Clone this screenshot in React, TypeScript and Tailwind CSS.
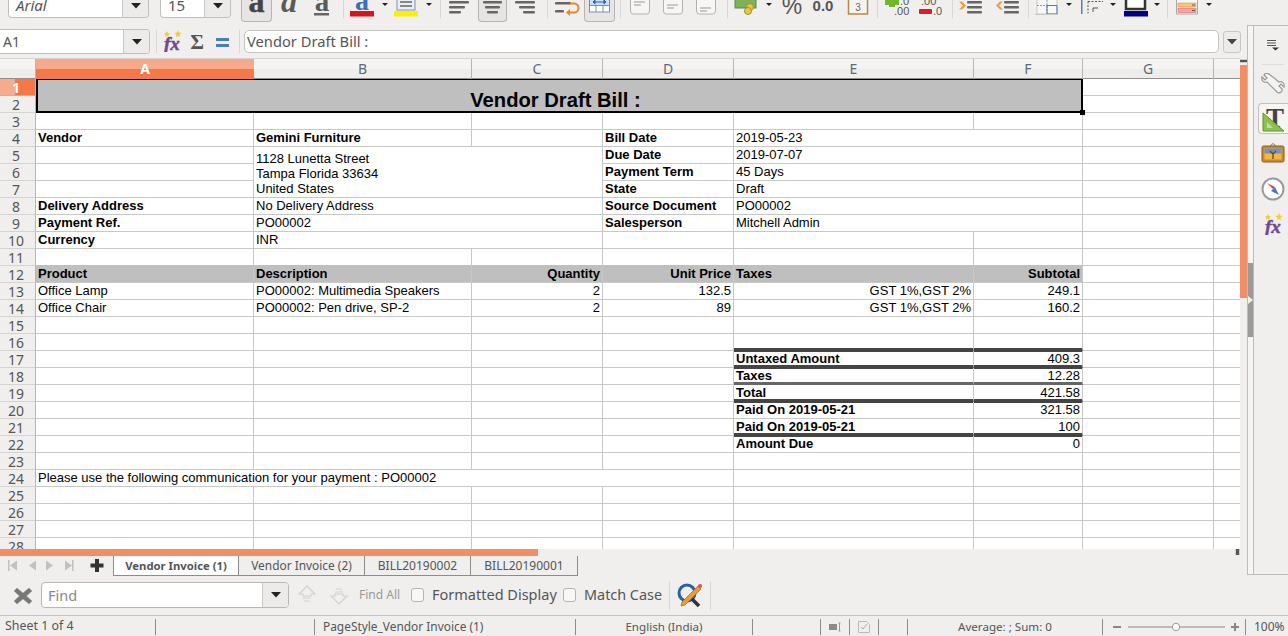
import type { ReactNode } from "react";

const COLS = ["A", "B", "C", "D", "E", "F", "G", "H"];
const ROWS = Array.from({ length: 28 }, (_, i) => i + 1);

const bold = "font-bold";
const right = "text-right pr-[2px]";
const head = "bg-[#bfbfbf] border-[#bfbfbf] -mt-px pt-px font-bold";
const thick = "border-b-[4px] border-b-[#444444] -mb-px";
const mid = "border-b-[3px] border-b-[#666666]";

type CellDef = { text?: ReactNode; cls?: string };

const CELLS: Record<string, CellDef> = {
  A4: { text: "Vendor", cls: bold },
  B4: { text: "Gemini Furniture", cls: bold },
  D4: { text: "Bill Date", cls: bold },
  E4: { text: "2019-05-23", cls: "col-span-2" },
  B5: {
    text: (
      <span className="block leading-[15px] pt-[4px]">
        1128 Lunetta Street
        <br />
        Tampa Florida 33634
        <br />
        United States
      </span>
    ),
    cls: "col-span-2 row-span-3",
  },
  D5: { text: "Due Date", cls: bold },
  E5: { text: "2019-07-07", cls: "col-span-2" },
  D6: { text: "Payment Term", cls: bold },
  E6: { text: "45 Days", cls: "col-span-2" },
  D7: { text: "State", cls: bold },
  E7: { text: "Draft", cls: "col-span-2" },
  A8: { text: "Delivery Address", cls: bold },
  B8: { text: "No Delivery Address", cls: "col-span-2" },
  D8: { text: "Source Document", cls: bold },
  E8: { text: "PO00002", cls: "col-span-2" },
  A9: { text: "Payment Ref.", cls: bold },
  B9: { text: "PO00002", cls: "col-span-2" },
  D9: { text: "Salesperson", cls: bold },
  E9: { text: "Mitchell Admin", cls: "col-span-2" },
  A10: { text: "Currency", cls: bold },
  B10: { text: "INR", cls: "col-span-2" },
  A12: { text: "Product", cls: head },
  B12: { text: "Description", cls: head },
  C12: { text: "Quantity", cls: `${head} ${right}` },
  D12: { text: "Unit Price", cls: `${head} ${right}` },
  E12: { text: "Taxes", cls: head },
  F12: { text: "Subtotal", cls: `${head} ${right}` },
  A13: { text: "Office Lamp" },
  B13: { text: "PO00002: Multimedia Speakers" },
  C13: { text: "2", cls: right },
  D13: { text: "132.5", cls: right },
  E13: { text: "GST 1%,GST 2%", cls: right },
  F13: { text: "249.1", cls: right },
  A14: { text: "Office Chair" },
  B14: { text: "PO00002: Pen drive, SP-2" },
  C14: { text: "2", cls: right },
  D14: { text: "89", cls: right },
  E14: { text: "GST 1%,GST 2%", cls: right },
  F14: { text: "160.2", cls: right },
  E16: { cls: thick },
  F16: { cls: thick },
  E17: { text: "Untaxed Amount", cls: `${bold} ${thick}` },
  F17: { text: "409.3", cls: `${right} ${thick}` },
  E18: { text: "Taxes", cls: `${bold} ${mid}` },
  F18: { text: "12.28", cls: `${right} ${mid}` },
  E19: { text: "Total", cls: `${bold} ${thick}` },
  F19: { text: "421.58", cls: `${right} ${thick}` },
  E20: { text: "Paid On 2019-05-21", cls: bold },
  F20: { text: "321.58", cls: right },
  E21: { text: "Paid On 2019-05-21", cls: `${bold} ${thick}` },
  F21: { text: "100", cls: `${right} ${thick}` },
  E22: { text: "Amount Due", cls: bold },
  F22: { text: "0", cls: right },
  A24: { text: "Please use the following communication for your payment : PO00002", cls: "col-span-4" },
};

// cells swallowed by a merge
const COVERED = new Set<string>([
  ...["A", "B", "C", "D", "E", "F"].flatMap((c) => [`${c}1`, `${c}2`]),
  "C5", "C6", "C7", "B6", "B7", "C8", "C9", "C10",
  "F4", "F5", "F6", "F7", "F8", "F9",
  "B24", "C24", "D24",
]);

function Caret({ x, y = 3 }: { x: number; y?: number }) {
  return <path d={`M${x} ${y}h6l-3 3z`} fill="#222" />;
}

function Bars({ x, w = 20, color = "#666" }: { x: number; w?: number; color?: string }) {
  return (
    <g fill={color}>
      <rect x={x} y="1" width={w} height="2.5" rx="1" />
      <rect x={x} y="6" width={w} height="2.5" rx="1" />
      <rect x={x} y="11" width={w} height="2.5" rx="1" />
    </g>
  );
}

function Sep({ h = "h-[18px]" }: { h?: string }) {
  return (
    <div className="w-[8px] shrink-0 flex justify-center">
      <div className={`w-px bg-[#d8d7d5] ${h}`} />
    </div>
  );
}

function Pressed({ w, children }: { w: string; children: ReactNode }) {
  return (
    <div className={`${w} h-[22px] shrink-0 bg-[#e6e5e3] border-x border-b border-[#b5b4b2] rounded-b-[4px] overflow-hidden`}>
      {children}
    </div>
  );
}

function Combo({ w, label, italic }: { w: string; label: string; italic?: boolean }) {
  return (
    <div className={`${w} h-[18px] shrink-0 flex bg-white border-x border-b border-[#c0bfbd] rounded-b-[4px] overflow-hidden`}>
      <div className={`flex-1 pl-[7px] text-[15px] leading-[11px] text-[#555] ${italic ? "italic" : ""}`}>{label}</div>
      <div className="w-[26px] bg-[#ecebe9] border-l border-[#c8c7c5] flex justify-center pt-[3px]">
        <svg className="w-[10px] h-[6px]" viewBox="0 0 10 6"><path d="M0 0h10L5 5.5z" fill="#222" /></svg>
      </div>
    </div>
  );
}

function AlignBox({ lineY }: { lineY: number }) {
  return (
    <svg className="w-[33px] h-[25px] shrink-0" viewBox="0 0 33 25">
      <rect x="6.5" y="-4" width="19" height="18" rx="3" fill="#f7f6f5" stroke="#b3b2b0" />
      <path d={`M10 ${lineY}h11M10 ${lineY + 3}h7`} stroke="#9a9997" strokeWidth="1" />
    </svg>
  );
}

function Toolbar() {
  return (
    <div className="h-[25px] shrink-0 flex items-start overflow-hidden pl-[8px]">
      <Combo w="w-[141px]" label="Arial" italic />
      <div className="w-[11px] shrink-0" />
      <Combo w="w-[71px]" label="15" />
      <div className="w-[10px] shrink-0" />
      <Pressed w="w-[31px]">
        <svg className="w-[29px] h-[21px]" viewBox="0 0 29 21">
          <text x="14.5" y="12" textAnchor="middle" fontFamily="Liberation Serif, serif" fontSize="32" fontWeight="700" fill="#444" stroke="#444" strokeWidth="0.5">a</text>
        </svg>
      </Pressed>
      <svg className="w-[34px] h-[25px] shrink-0" viewBox="0 0 34 25">
        <text x="17" y="12" textAnchor="middle" fontFamily="Liberation Serif, serif" fontSize="32" fontStyle="italic" fontWeight="700" fill="#5a5a5a">a</text>
      </svg>
      <svg className="w-[33px] h-[25px] shrink-0" viewBox="0 0 33 25">
        <text x="16" y="11" textAnchor="middle" fontFamily="Liberation Serif, serif" fontSize="29" fontWeight="700" fill="#5a5a5a">a</text>
        <rect x="8" y="13" width="15" height="2.5" fill="#666" />
      </svg>
      <Sep />
      <svg className="w-[45px] h-[25px] shrink-0" viewBox="0 0 45 25">
        <text x="15" y="10" textAnchor="middle" fontFamily="Liberation Serif, serif" fontSize="28" fontWeight="700" fill="#3c6eb4">a</text>
        <rect x="3" y="11" width="24" height="5.5" fill="#d6161f" />
        <Caret x={35} />
      </svg>
      <svg className="w-[44px] h-[25px] shrink-0" viewBox="0 0 44 25">
        <rect x="5" y="-4" width="18" height="14" fill="#e9eef6" stroke="#7f93ad" />
        <path d="M8 2h12M8 6h12" stroke="#666" strokeWidth="1.5" />
        <rect x="2" y="11" width="24" height="5.5" fill="#fbf000" />
        <Caret x={34} />
      </svg>
      <Sep />
      <svg className="w-[32px] h-[25px] shrink-0" viewBox="0 0 32 25">
        <g fill="#666">
          <rect x="5" y="1" width="20" height="2.5" rx="1" />
          <rect x="5" y="6" width="16" height="2.5" rx="1" />
          <rect x="5" y="11" width="12" height="2.5" rx="1" />
        </g>
      </svg>
      <div className="w-[2px] shrink-0" />
      <Pressed w="w-[29px]">
        <svg className="w-[27px] h-[21px]" viewBox="0 0 27 21">
          <g fill="#666">
            <rect x="4" y="1" width="19" height="2.5" rx="1" />
            <rect x="6" y="6" width="15" height="2.5" rx="1" />
            <rect x="8" y="11" width="11" height="2.5" rx="1" />
          </g>
        </svg>
      </Pressed>
      <svg className="w-[36px] h-[25px] shrink-0" viewBox="0 0 36 25">
        <g fill="#666">
          <rect x="8" y="1" width="20" height="2.5" rx="1" />
          <rect x="12" y="6" width="16" height="2.5" rx="1" />
          <rect x="16" y="11" width="12" height="2.5" rx="1" />
        </g>
      </svg>
      <Sep />
      <svg className="w-[33px] h-[25px] shrink-0" viewBox="0 0 33 25">
        <rect x="4" y="2" width="16" height="2.5" rx="1" fill="#666" />
        <rect x="4" y="10" width="9" height="2.5" rx="1" fill="#666" />
        <path d="M19 3.5h4a4.5 4.5 0 0 1 0 9h-6" fill="none" stroke="#e8872a" strokeWidth="2" />
        <path d="M19 9l-4 3.5 4 3.5z" fill="#e8872a" />
      </svg>
      <Pressed w="w-[31px]">
        <svg className="w-[29px] h-[21px]" viewBox="0 0 29 21">
          <rect x="4.5" y="-2" width="20" height="14" fill="#fff" stroke="#7c8da3" />
          <rect x="5" y="-2" width="19" height="7" fill="#cfe0f3" />
          <path d="M4.5 5.5h20M11 6v6M18 6v6" stroke="#7c8da3" />
          <path d="M8 2h13M8 2l2-2v4zM21 2l-2-2v4z" stroke="#2f62a8" fill="#2f62a8" strokeWidth="1" />
        </svg>
      </Pressed>
      <div className="w-px shrink-0" />
      <Sep />
      <AlignBox lineY={2} />
      <AlignBox lineY={5} />
      <AlignBox lineY={8} />
      <Sep />
      <svg className="w-[44px] h-[25px] shrink-0" viewBox="0 0 44 25">
        <rect x="4" y="-4" width="21" height="12" fill="#7fb05c" stroke="#5c8a3e" />
        <circle cx="19" cy="7" r="3.5" fill="#e4c84a" stroke="#a98f22" />
        <circle cx="17" cy="11" r="3.5" fill="#e4c84a" stroke="#a98f22" />
        <Caret x={35} />
      </svg>
      <svg className="w-[33px] h-[25px] shrink-0" viewBox="0 0 33 25">
        <text x="17" y="14" textAnchor="middle" fontFamily="Liberation Sans, sans-serif" fontSize="23" fill="#555">%</text>
      </svg>
      <svg className="w-[32px] h-[25px] shrink-0" viewBox="0 0 32 25">
        <text x="15" y="11" textAnchor="middle" fontFamily="Liberation Sans, sans-serif" fontSize="15" fontWeight="700" fill="#555">0.0</text>
      </svg>
      <svg className="w-[33px] h-[25px] shrink-0" viewBox="0 0 33 25">
        <rect x="8.5" y="-3" width="19" height="17" fill="#f6f4ee" stroke="#b58a4a" strokeWidth="1.5" />
        <text x="18" y="11" textAnchor="middle" fontFamily="Liberation Sans, sans-serif" fontSize="10" fill="#666">3</text>
      </svg>
      <Sep />
      <svg className="w-[32px] h-[25px] shrink-0" viewBox="0 0 32 25">
        <path d="M8 -3h6v3h4v5h-4v2h-6v-2h-4v-5h4z" fill="#74b52c" />
        <text x="19" y="5" fontFamily="Liberation Sans, sans-serif" fontSize="11" fill="#555">.0</text>
        <text x="13" y="15" fontFamily="Liberation Sans, sans-serif" fontSize="11" fill="#555">.00</text>
      </svg>
      <svg className="w-[35px] h-[25px] shrink-0" viewBox="0 0 35 25">
        <rect x="6" y="9" width="13" height="5" rx="1" fill="#d5202a" />
        <text x="8" y="5" fontFamily="Liberation Sans, sans-serif" fontSize="11" fill="#555">.00</text>
        <text x="20" y="15" fontFamily="Liberation Sans, sans-serif" fontSize="11" fill="#555">.0</text>
      </svg>
      <Sep />
      <svg className="w-[33px] h-[25px] shrink-0" viewBox="0 0 33 25">
        <path d="M3 1.5l4 4-4 4h3l4-4-4-4z" fill="#ef9a3c" />
        <Bars x={11} w={15} />
      </svg>
      <svg className="w-[35px] h-[25px] shrink-0" viewBox="0 0 35 25">
        <path d="M11 1.5l-4 4 4 4h3l-4-4 4-4z" fill="#ef9a3c" />
        <Bars x={15} w={15} />
      </svg>
      <Sep />
      <svg className="w-[49px] h-[25px] shrink-0" viewBox="0 0 49 25">
        <rect x="5" y="-3" width="20" height="17" fill="#f8f8f7" stroke="#c8c8c6" />
        <path d="M15 -3v17M5 5.5h20" stroke="#7a9cc6" strokeDasharray="2 1" />
        <path d="M15 5.5h10v8.5h-10z" fill="none" stroke="#4a7ab8" />
        <rect x="3" y="14" width="23" height="1" fill="#c8c8c6" />
        <Caret x={34} />
      </svg>
      <svg className="w-[40px] h-[25px] shrink-0" viewBox="0 0 40 25">
        <rect x="0" y="0" width="1.5" height="14" fill="#5d7ea6" />
        <path d="M7 1.5h15M7 1.5v12" stroke="#555" strokeDasharray="2 1.5" fill="none" />
        <path d="M12 12v-4h5" stroke="#555" fill="none" />
        <Caret x={29} />
      </svg>
      <svg className="w-[39px] h-[25px] shrink-0" viewBox="0 0 39 25">
        <rect x="5" y="-5" width="19" height="14" fill="#fff" stroke="#333" strokeWidth="2.5" />
        <rect x="3" y="11" width="24" height="5.5" fill="#000084" />
        <Caret x={33} />
      </svg>
      <div className="w-[3px] shrink-0" />
      <Sep />
      <svg className="w-[44px] h-[25px] shrink-0" viewBox="0 0 44 25">
        <rect x="5.5" y="-3" width="21" height="17" fill="#f7f7f7" stroke="#a9a9a9" />
        <rect x="7" y="3" width="18" height="4" fill="#f8c27a" stroke="#e08a2a" strokeWidth="0.5" />
        <rect x="7" y="8.5" width="18" height="4" fill="#f7a3a3" stroke="#d95454" strokeWidth="0.5" />
        <path d="M21 5h3M21 10.5h3" stroke="#555" />
        <Caret x={35} />
      </svg>
    </div>
  );
}

function FxIcon() {
  return (
    <svg className="w-[22px] h-[22px]" viewBox="0 0 22 22">
      <text x="3" y="20" fontFamily="Liberation Serif, serif" fontStyle="italic" fontWeight="700" fontSize="19" fill="#6d4a90" stroke="#6d4a90" strokeWidth="0.5">fx</text>
      <path d="M6 1l1 2 2 .5-1.500 1.500.5 2-2-1-2 1 .5-2L3 3.500 5 3z" fill="#f0d030" />
      <path d="M17 0l1 2.500 2.500.5-2 1.700.6 2.500-2.100-1.300-2.100 1.300.6-2.500-2-1.700 2.500-.5z" fill="#f0d030" />
    </svg>
  );
}

function FormulaBar() {
  return (
    <div className="h-[33px] shrink-0 flex items-start text-[#555]">
      <div className="w-[150px] h-[25px] mt-[4px] flex bg-white border-y border-r border-[#c0bfbd] rounded-r-[4px] overflow-hidden">
        <div className="flex-1 pl-[3px] text-[14px] leading-[23px]">A1</div>
        <div className="w-[26px] bg-[#ecebe9] border-l border-[#c8c7c5] flex items-center justify-center">
          <svg className="w-[10px] h-[6px]" viewBox="0 0 10 6"><path d="M0 0h10L5 5.5z" fill="#222" /></svg>
        </div>
      </div>
      <div className="ml-[6px] mt-[5px] w-px h-[23px] bg-[#d8d7d5]" />
      <div className="w-[30px] h-[25px] mt-[5px] flex justify-center"><FxIcon /></div>
      <div className="w-[20px] h-[25px] mt-[5px] flex justify-center">
        <svg className="w-[20px] h-[24px]" viewBox="0 0 20 24">
          <text x="10" y="19" textAnchor="middle" fontFamily="Liberation Serif, serif" fontWeight="700" fontSize="21" fill="#555">Σ</text>
        </svg>
      </div>
      <div className="w-[30px] mt-[13px] flex flex-col items-center gap-[3px]">
        <div className="w-[13px] h-[3px] bg-[#4a7db8]" />
        <div className="w-[13px] h-[3px] bg-[#4a7db8]" />
      </div>
      <div className="ml-[2px] mt-[5px] w-px h-[23px] bg-[#d8d7d5]" />
      <div className="ml-[4px] mt-[5px] w-[975px] h-[23px] bg-white border border-[#c5c4c2] rounded-[5px] pl-[2px] text-[14.7px] leading-[21px]">
        Vendor Draft Bill :
      </div>
      <div className="ml-[4px] mt-[6px] w-[18px] h-[22px] bg-[#ecebe9] border border-[#c8c7c5] rounded-[3px] flex items-center justify-center">
        <svg className="w-[10px] h-[6px]" viewBox="0 0 10 6"><path d="M0 0h10L5 5.5z" fill="#444" /></svg>
      </div>
    </div>
  );
}

function ColHeaders() {
  return (
    <div className="h-[21px] shrink-0 grid grid-cols-[36px_218px_218px_131px_131px_240px_109px_131px_26px] border-t border-[#d4d3d1] border-b border-b-[#8f8f8f] text-[14px] leading-[20px] text-[#5a6a80] bg-[linear-gradient(to_bottom,#f5f4f2_50%,#eeedeb_50%)]">
      <div className="border-r border-[#b5b5b5]" />
      {COLS.map((c, i) =>
        c === "A" ? (
          <div key={c} className="text-center font-bold text-white bg-[linear-gradient(to_bottom,#f7a98b_50%,#f37a48_50%)]">
            {c}
          </div>
        ) : (
          <div key={c} className={`text-center ${i < 7 ? "border-r border-[#b5b5b5]" : ""}`}>
            {i < 7 ? c : ""}
          </div>
        ),
      )}
    </div>
  );
}

function SheetBody() {
  return (
    <div className="h-[470px] overflow-hidden grid grid-cols-[36px_218px_218px_131px_131px_240px_109px_131px_26px] auto-rows-[17px] font-['Liberation_Sans',Arial,sans-serif] text-[13px] leading-[16px] text-black bg-white">
      {ROWS.map((r) => [
        <div
          key={`h${r}`}
          className={
            r === 1
              ? "text-center pr-[3px] font-bold text-white border-r border-b border-[#b5b5b5] bg-[linear-gradient(to_right,#f7ab8e_44%,#f37a48_44%)] font-['Noto_Sans',sans-serif] text-[14px] leading-[18px]"
              : "text-center pr-[3px] text-[#555] bg-[#f0efed] border-r border-b border-r-[#b5b5b5] border-b-[#d4d3d1] font-['Noto_Sans',sans-serif] text-[14px] leading-[18px]"
          }
        >
          {r}
        </div>,
        r === 1 && (
          <div
            key="title"
            className="col-span-6 row-span-2 relative z-10 -mt-px bg-[#bfbfbf] border-2 border-black flex items-end justify-center pr-[8px] font-bold text-[20.2px] leading-[22px]"
          >
            Vendor Draft Bill :
            <div className="absolute -right-[4px] -bottom-[4px] w-[5px] h-[5px] bg-black" />
          </div>
        ),
        ...COLS.map((c) => {
          const id = `${c}${r}`;
          if (COVERED.has(id)) return null;
          const def = CELLS[id] ?? {};
          return (
            <div
              key={id}
              className={`whitespace-nowrap pl-[2px] border-b border-[#c8c8c8] ${c === "H" ? "" : "border-r"} ${def.cls ?? ""}`}
            >
              {def.text}
            </div>
          );
        }),
      ])}
    </div>
  );
}

function Tabs() {
  const tabCls = "h-[20px] shrink-0 border-r border-b border-[#8c8c8c] text-center leading-[19px] text-[#555]";
  return (
    <div className="h-[19px] shrink-0 flex items-start overflow-visible">
      <svg className="w-[113px] h-[19px] shrink-0" viewBox="0 0 113 19">
        <g fill="#c2c1bf">
          <path d="M8 4h1.500v11H8zM17 4.500v10L10 9.500z" />
          <path d="M36 4.500v10l-7-5z" />
          <path d="M46 4.500v10l7-5z" />
          <path d="M65 4.500v10l7-5zM72 4h1.500v11H72z" />
        </g>
        <path d="M95 3h4v4.500h4.500v4H99V16h-4v-4.500h-4.500v-4H95z" fill="#333" />
      </svg>
      <div className={`${tabCls} w-[126px] border-l bg-white font-bold text-[#444] text-[11.3px]`}>Vendor Invoice (1)</div>
      <div className={`${tabCls} w-[126px] text-[11.9px]`}>Vendor Invoice (2)</div>
      <div className={`${tabCls} w-[106px] text-[12px]`}>BILL20190002</div>
      <div className={`${tabCls} w-[107px] text-[12px]`}>BILL20190001</div>
    </div>
  );
}

function SidePanel() {
  return (
    <div className="w-[41px] shrink-0 flex border-t border-b border-[#bdbcba]">
      <div className="w-[7px] shrink-0 bg-[#f6f5f3] border-x border-[#bdbcba] pt-[237px]">
        <div className="h-[74px] bg-[#9a9a9a] flex items-center">
          <svg className="w-[5px] h-[8px]" viewBox="0 0 5 8"><path d="M0 0l5 4-5 4z" fill="#f2f2f2" /></svg>
        </div>
      </div>
      <div className="flex-1 pl-[4px] flex flex-col items-center">
        <svg className="w-[14px] h-[12px] mt-[13px] shrink-0" viewBox="0 0 14 12">
          <path d="M1 1.500h9M1 4h9M1 6.500h9" stroke="#555" strokeWidth="1" />
          <path d="M6 8.500h7l-3.500 3z" fill="#333" />
        </svg>
        <div className="w-[22px] h-px mt-[13px] bg-[#dcdbd9] shrink-0" />
        <svg className="w-[24px] h-[22px] mt-[8px] shrink-0" viewBox="0 0 24 22">
          <path d="M3 2l3 3-2 2-3-3c-1 4 2 6 5 5l10 10c2 2 6 0 5-3l-3-3 2-2 3 3c1-4-2-6-5-5L8 1C6 0 4 0 3 2z" fill="#f4f4f4" stroke="#9a9a9a" strokeWidth="1.200" />
        </svg>
        <div className="w-[30px] h-[31px] mt-[8px] shrink-0 border border-r-0 border-[#c0bfbd] rounded-l-[4px] bg-[#f6f5f3] flex justify-center items-center">
          <svg className="w-[24px] h-[26px]" viewBox="0 0 24 26">
            <text x="13" y="21" textAnchor="middle" fontFamily="Liberation Serif, serif" fontWeight="700" fontSize="27" fill="#444">T</text>
            <path d="M1 7l21 18H1z" fill="#8cc152" stroke="#5d9426" />
            <path d="M5 16v6h6z" fill="#f6f5f3" opacity="0.5" />
          </svg>
        </div>
        <svg className="w-[24px] h-[20px] mt-[9px] shrink-0" viewBox="0 0 24 20">
          <path d="M9 3l3-2.500L15 3" fill="none" stroke="#777" />
          <rect x="1" y="3" width="22" height="16" rx="1.500" fill="#c88a2e" stroke="#8e5d16" />
          <rect x="3.500" y="5.500" width="17" height="11" fill="#f4b73f" />
          <rect x="3.500" y="5.500" width="17" height="5" fill="#6f93c4" />
          <path d="M12 16v-6M12 11l-3-3M12 11l3-3" stroke="#5b4a35" strokeWidth="1.300" fill="none" />
        </svg>
        <svg className="w-[24px] h-[24px] mt-[14px] shrink-0" viewBox="0 0 24 24">
          <circle cx="12" cy="12" r="10.500" fill="#fff" stroke="#9a9a9a" strokeWidth="2" />
          <path d="M6 6l8 4-2 2z" fill="#d94040" />
          <path d="M18 18l-8-4 2-2zM14 10l4 8-6-6z" fill="#4a7db8" />
        </svg>
        <div className="mt-[12px] shrink-0"><FxIcon /></div>
      </div>
    </div>
  );
}

function Checkbox() {
  return <div className="w-[13px] h-[14px] shrink-0 bg-[#f8f7f6] border border-[#b5b4b2] rounded-[3px]" />;
}

function FindBar() {
  return (
    <div className="h-[40px] shrink-0 flex items-center text-[#555]">
      <svg className="w-[41px] h-[24px] shrink-0" viewBox="0 0 41 24">
        <path d="M17 5l6 5 6-5 3 3-5.500 5 5.500 5-3 3-6-5-6 5-3-3 5.500-5L14 8z" fill="#777" stroke="#999" strokeWidth="0.5" />
      </svg>
      <div className="w-[248px] h-[26px] shrink-0 flex bg-white border border-[#b8b7b5] rounded-[4px] overflow-hidden">
        <div className="flex-1 pl-[6px] text-[14.5px] leading-[24px] text-[#888]">Find</div>
        <div className="w-[26px] bg-[#ecebe9] border-l border-[#c8c7c5] flex items-center justify-center">
          <svg className="w-[10px] h-[6px]" viewBox="0 0 10 6"><path d="M0 0h10L5 5.5z" fill="#222" /></svg>
        </div>
      </div>
      <svg className="w-[70px] h-[26px] shrink-0" viewBox="0 0 70 26">
        <g fill="none" stroke="#d2d1cf" strokeWidth="1.200">
          <path d="M18 4l8 8h-4v2h-8v-2h-4zM14 16h8M15 19h6" />
          <path d="M50 22l8-8h-4v-2h-8v2h-4zM46 10h8M47 7h6" />
        </g>
      </svg>
      <span className="w-[52px] shrink-0 text-[12px] text-[#999]">Find All</span>
      <Checkbox />
      <span className="ml-[8px] w-[131px] shrink-0 text-[14.5px] whitespace-nowrap">Formatted Display</span>
      <Checkbox />
      <span className="ml-[8px] w-[85px] shrink-0 text-[14.4px] whitespace-nowrap">Match Case</span>
      <div className="w-px h-[29px] bg-[#d8d7d5] shrink-0" />
      <svg className="w-[40px] h-[26px] shrink-0" viewBox="0 0 40 26">
        <circle cx="17" cy="11" r="8" fill="none" stroke="#2d5fa8" strokeWidth="3" />
        <path d="M22 17l7 7" stroke="#333" strokeWidth="3.500" />
        <path d="M12 20L28 4l3 3-16 16-4 1z" fill="#ef9a2c" stroke="#a86414" strokeWidth="0.700" />
        <circle cx="30" cy="4" r="2" fill="#e05050" />
      </svg>
      <div className="w-px h-[29px] bg-[#d8d7d5] shrink-0" />
    </div>
  );
}

function StatusCell({ w, children, center }: { w: string; children?: ReactNode; center?: boolean }) {
  return (
    <div className={`${w} h-[16px] shrink-0 border-r border-[#8c8c8c] flex items-center whitespace-nowrap ${center ? "justify-center" : "pl-[5px]"}`}>
      {children}
    </div>
  );
}

function StatusBar() {
  return (
    <div className="h-[21px] shrink-0 flex items-center pt-px border-t border-[#c4c3c1] text-[11.6px] text-[#555]">
      <StatusCell w="w-[156px]"><span className="text-[12.4px]">Sheet 1 of 4</span></StatusCell>
      <StatusCell w="w-[159px]" />
      <StatusCell w="w-[261px]"><span className="pl-[3px] text-[11.9px]">PageStyle_Vendor Invoice (1)</span></StatusCell>
      <StatusCell w="w-[177px]" center>English (India)</StatusCell>
      <StatusCell w="w-[68px]" />
      <StatusCell w="w-[29px]" center>
        <svg className="w-[14px] h-[10px]" viewBox="0 0 14 10">
          <rect x="1" y="2" width="8" height="6" fill="#8a8a8a" />
          <path d="M10.500 1h2M11.500 1v8M10.500 9h2" stroke="#999" fill="none" />
        </svg>
      </StatusCell>
      <StatusCell w="w-[29px]" center>
        <svg className="w-[12px] h-[12px]" viewBox="0 0 12 12">
          <path d="M.5.5h8l3 3v8H.5z" fill="none" stroke="#bbb" />
          <path d="M3 6l2 2 4-5" fill="none" stroke="#aaa" />
        </svg>
      </StatusCell>
      <StatusCell w="w-[29px]" />
      <StatusCell w="w-[195px]" center>Average: ; Sum: 0</StatusCell>
      <div className="w-[143px] h-[16px] shrink-0 border-r border-[#8c8c8c] flex items-center">
        <svg className="w-[142px] h-[14px]" viewBox="0 0 142 14">
          <path d="M10 7h8" stroke="#888" strokeWidth="2" />
          <path d="M25 7h97" stroke="#bdbcba" strokeWidth="2" />
          <circle cx="73" cy="7" r="3.700" fill="#fff" stroke="#999" />
          <path d="M128 7h8M132 3v8" stroke="#888" strokeWidth="2" />
        </svg>
      </div>
      <div className="flex-1 pl-[8px] whitespace-nowrap text-[12px]">100%</div>
    </div>
  );
}

export default function App() {
  return (
    <div className="w-[1288px] h-[636px] overflow-hidden flex flex-col bg-[#f0efed] font-['Noto_Sans',sans-serif]">
      <Toolbar />
      <div className="h-[550px] shrink-0 flex">
        <div className="w-[1247px] shrink-0 flex flex-col">
          <FormulaBar />
          <div className="flex h-[491px] shrink-0">
            <div className="w-[1240px] shrink-0 flex flex-col">
              <ColHeaders />
              <SheetBody />
            </div>
            <div className="w-[7px] shrink-0 flex flex-col">
              <div className="mt-[1px] h-[4px] bg-[#555] border-y border-[#ccc]" />
              <div className="mt-[2px] h-[233px] bg-[#f28e66]" />
            </div>
          </div>
          <div className="h-[7px] shrink-0 flex">
            <div className="w-[538px] bg-[#f28e66]" />
            <div className="ml-[697px] w-[5px] h-[6px] bg-[#555] border-x border-[#ccc]" />
          </div>
          <Tabs />
        </div>
        <SidePanel />
      </div>
      <FindBar />
      <StatusBar />
    </div>
  );
}
